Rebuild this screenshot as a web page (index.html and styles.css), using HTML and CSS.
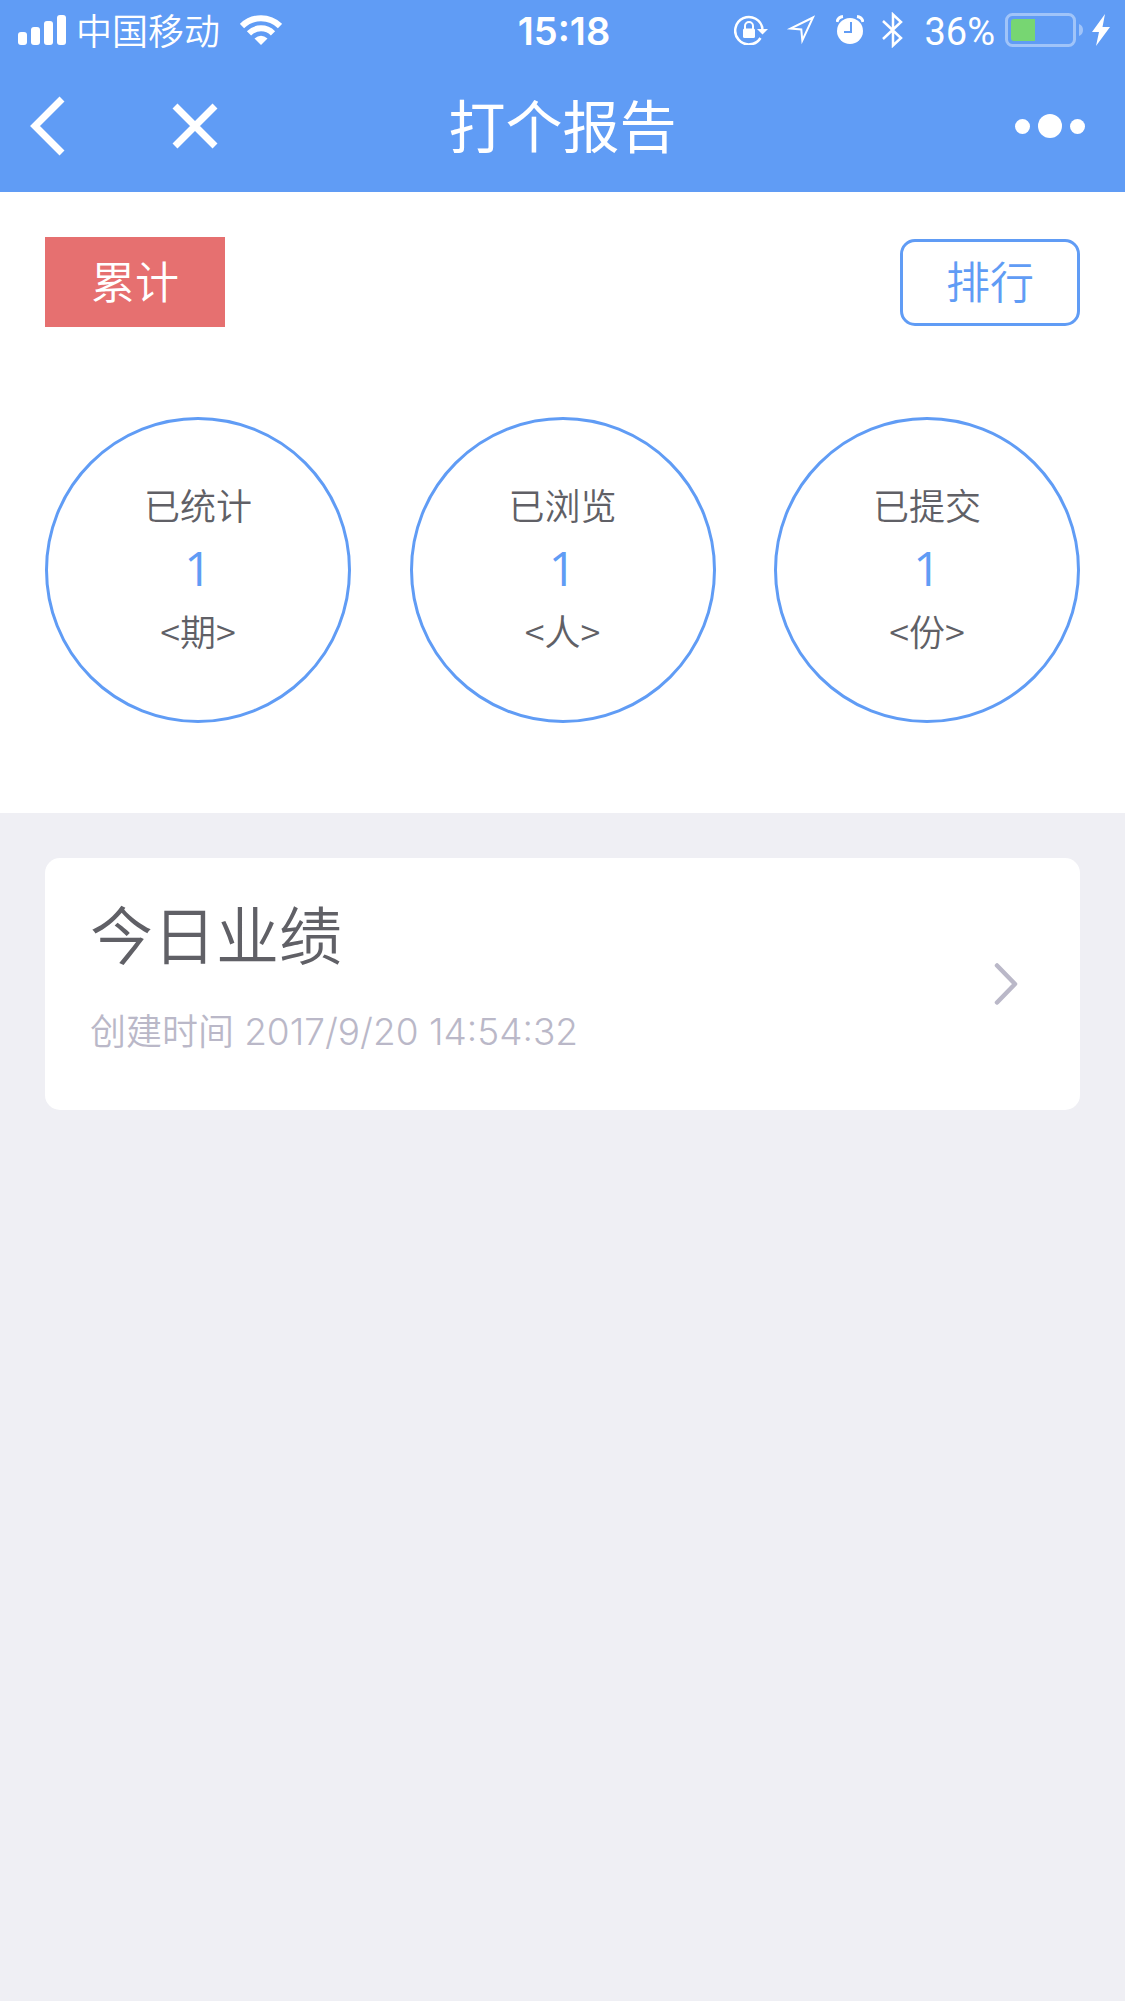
FILE: index.html
```html
<!DOCTYPE html>
<html lang="zh-CN">
<head>
    <meta charset="UTF-8">
    <meta name="viewport" content="width=device-width, initial-scale=1.0">
    <title>打个报告</title>
    <link rel="stylesheet" href="styles.css">
</head>
<body>
    <header class="header">
        <div class="status-bar">
            <div class="status-left">
                <svg class="signal" width="48" height="30" viewBox="0 0 48 30" fill="#fff">
                    <rect x="0" y="17" width="9" height="13" rx="3"/>
                    <rect x="13" y="12" width="9" height="18" rx="3"/>
                    <rect x="26" y="6" width="9" height="24" rx="3"/>
                    <rect x="39" y="0" width="9" height="30" rx="3"/>
                </svg>
                <span class="carrier">中国移动</span>
                <svg class="wifi" width="42" height="30" viewBox="0 0 42 30" fill="none" stroke="#fff" stroke-width="6">
                    <path d="M2 11 A27 27 0 0 1 40 11"/>
                    <path d="M9 18.3 A17 17 0 0 1 33 18.3"/>
                    <path d="M14.500 23.500 Q21 18 27.500 23.500 L21 30 Z" fill="#fff" stroke="none"/>
                </svg>
            </div>
            <time class="clock">15:18</time>
            <div class="status-right">
                <svg width="34" height="30" viewBox="0 0 34 30">
                    <path d="M26.500 23 A13.700 13.700 0 1 1 28.500 14" fill="none" stroke="#fff" stroke-width="2.500"/>
                    <path d="M23 14 H34 L28.500 19.500 Z" fill="#fff"/>
                    <rect x="9" y="13.500" width="12" height="9.500" rx="1.500" fill="#fff"/>
                    <path d="M11 14 V11 A4 4 0 0 1 19 11 V14" fill="none" stroke="#fff" stroke-width="2"/>
                </svg>
                <svg class="location" width="30" height="30" viewBox="0 0 30 30" fill="none" stroke="#fff" stroke-width="2">
                    <path d="M27 2.500 L4.500 13.500 L15.300 14.500 L16.300 25.500 Z"/>
                </svg>
                <svg class="alarm" width="28" height="30" viewBox="0 0 28 30">
                    <circle cx="14" cy="16" r="13" fill="#fff"/>
                    <path d="M1 7 Q2 2 7 1.500 M27 7 Q26 2 21 1.500" fill="none" stroke="#fff" stroke-width="3"/>
                    <path d="M15 7 V17 H8" fill="none" stroke="#609cf5" stroke-width="2"/>
                </svg>
                <svg class="bluetooth" width="22" height="36" viewBox="0 0 22 36" fill="none" stroke="#fff" stroke-width="2.500">
                    <path d="M1 9 L19 26 L11 33.500 V2.500 L19 10 L1 27"/>
                </svg>
                <span class="percent">36%</span>
                <svg class="battery" width="79" height="34" viewBox="0 0 79 34">
                    <rect x="1.500" y="1.500" width="68" height="31" rx="6" fill="none" stroke="#a0c4f9" stroke-width="3"/>
                    <path d="M6 9 Q6 6 9 6 H30 V28 H9 Q6 28 6 25 Z" fill="#77d672"/>
                    <path d="M74 11 Q78 12.500 78 17 Q78 21.500 74 23 Z" fill="#a0c4f9"/>
                </svg>
                <svg class="bolt" width="18" height="32" viewBox="0 0 18 32" fill="#fff">
                    <path d="M13 0 L0 18 H7 L4 32 L18 13 H10.500 Z"/>
                </svg>
            </div>
        </div>

        <nav class="nav-bar">
            <div class="nav-left">
                <button class="nav-button" type="button" aria-label="返回">
                    <svg width="36" height="60" viewBox="0 0 36 60" fill="none" stroke="#fff" stroke-width="7">
                        <path d="M32 3 L5 30 L32 57"/>
                    </svg>
                </button>
                <button class="nav-button" type="button" aria-label="关闭">
                    <svg width="46" height="46" viewBox="0 0 46 46" stroke="#fff" stroke-width="7">
                        <path d="M3 3 L43 43 M43 3 L3 43"/>
                    </svg>
                </button>
            </div>
            <h1 class="title">打个报告</h1>
            <button class="nav-button more" type="button" aria-label="更多">
                <svg width="70" height="24" viewBox="0 0 70 24" fill="#fff">
                    <circle cx="7.500" cy="12.500" r="7.500"/>
                    <circle cx="35" cy="12" r="12"/>
                    <circle cx="62.500" cy="12.500" r="7.500"/>
                </svg>
            </button>
        </nav>
    </header>

    <main>
        <section class="summary">
            <div class="toolbar">
                <button class="total-button" type="button">累计</button>
                <button class="rank-button" type="button">排行</button>
            </div>
            <div class="stats">
                <div class="stat">
                    <span>已统计</span>
                    <strong class="stat-number">1</strong>
                    <span>&lt;期&gt;</span>
                </div>
                <div class="stat">
                    <span>已浏览</span>
                    <strong class="stat-number">1</strong>
                    <span>&lt;人&gt;</span>
                </div>
                <div class="stat">
                    <span>已提交</span>
                    <strong class="stat-number">1</strong>
                    <span>&lt;份&gt;</span>
                </div>
            </div>
        </section>

        <section class="reports">
            <a class="report-card" href="#">
                <div class="report-info">
                    <h2 class="report-title">今日业绩</h2>
                    <p class="report-time">创建时间 <time>2017/9/20 14:54:32</time></p>
                </div>
                <svg width="24" height="42" viewBox="0 0 24 42" fill="none" stroke="#bab8c8" stroke-width="4.500" stroke-linecap="round" stroke-linejoin="round">
                    <path d="M3 2.500 L21 21 L3 39.500"/>
                </svg>
            </a>
        </section>
    </main>
</body>
</html>
```
FILE: styles.css
```css
:root {
    --primary-color: #609cf5;
    --danger-color: #e67070;
    --background: #efeff4;
    --text-color: #606066;
    --muted-color: #bab8c8;
}

* {
    margin: 0;
    padding: 0;
    box-sizing: border-box;
}

body {
    background: var(--background);
    color: var(--text-color);
    font-family: Inter, "Noto Sans CJK SC", sans-serif;
    font-weight: 350;
    min-height: 100vh;
}

svg {
    display: block;
    flex-shrink: 0;
}

button {
    font: inherit;
    cursor: pointer;
}

/* Header */
.header {
    background: var(--primary-color);
    color: #fff;
}

.status-bar {
    display: grid;
    grid-template-columns: 1fr auto 1fr;
    align-items: center;
    height: 60px;
    padding: 0 15px 0 18px;
    font-size: 36px;
    line-height: 54px;
}

.status-left,
.status-right {
    display: flex;
    align-items: center;
}

.status-right {
    justify-content: flex-end;
}

.carrier {
    margin: 0 20px 0 10px;
    padding-top: 4px;
}

.clock {
    padding-top: 2px;
    font-size: 38px;
    font-weight: 600;
}

.location {
    margin-left: 18px;
}

.alarm {
    margin-left: 20px;
}

.bluetooth {
    margin-left: 18px;
}

.percent {
    margin: 0 10px 0 20px;
    padding-top: 4px;
    font-family: Roboto, sans-serif;
    font-size: 38px;
    font-weight: 400;
}

.bolt {
    margin-left: 8px;
}

/* Nav */
.nav-bar {
    display: grid;
    grid-template-columns: 1fr auto 1fr;
    align-items: center;
    height: 132px;
    padding: 0 30px;
}

.nav-left {
    display: flex;
    align-items: center;
    gap: 106px;
}

.nav-button {
    background: none;
    border: none;
}

.more {
    justify-self: end;
    margin-right: 10px;
}

.title {
    padding-top: 4px;
    font-size: 57px;
    font-weight: 400;
    line-height: 84px;
}

/* Summary */
.summary {
    background: #fff;
    padding: 45px 45px 90px;
}

.toolbar {
    display: flex;
    justify-content: space-between;
    align-items: center;
    margin-bottom: 90px;
}

.total-button,
.rank-button {
    width: 180px;
    height: 90px;
    padding-bottom: 4px;
    font-size: 44px;
    border: none;
}

.total-button {
    background: var(--danger-color);
    color: #fff;
}

.rank-button {
    height: 87px;
    background: #fff;
    color: var(--primary-color);
    border: 3px solid var(--primary-color);
    border-radius: 15px;
}

.stats {
    display: flex;
    justify-content: space-between;
}

.stat {
    display: flex;
    flex-direction: column;
    align-items: center;
    justify-content: center;
    width: 306px;
    height: 306px;
    padding-bottom: 6px;
    border: 3px solid var(--primary-color);
    border-radius: 50%;
    font-family: "Noto Sans CJK SC", sans-serif;
    font-size: 36px;
    line-height: 63px;
}

.stat-number {
    color: var(--primary-color);
    font-family: "Open Sans", sans-serif;
    font-size: 48px;
    font-weight: 400;
}

/* Report list */
.reports {
    padding: 45px;
}

.report-card {
    display: flex;
    align-items: center;
    justify-content: space-between;
    padding: 33px 62px 33px 45px;
    background: #fff;
    border-radius: 15px;
    color: inherit;
    text-decoration: none;
}

.report-info {
    padding-bottom: 15px;
}

.report-title {
    font-size: 63px;
    font-weight: 350;
    line-height: 90px;
}

.report-time {
    margin-top: 21px;
    color: var(--muted-color);
    font-size: 36px;
    line-height: 60px;
}

.report-time time {
    font-size: 37px;
}
```
